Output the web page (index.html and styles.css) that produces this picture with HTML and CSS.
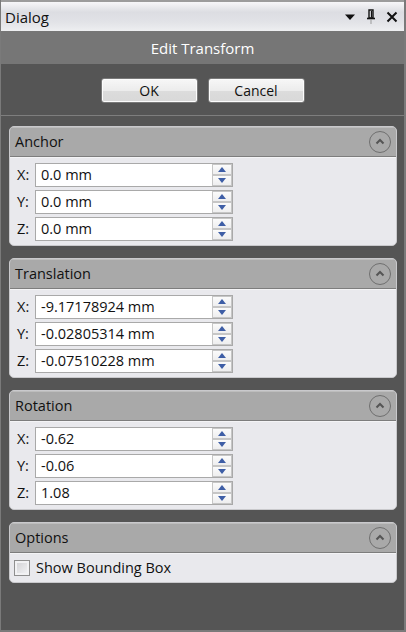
FILE: index.html
```html
<!DOCTYPE html>
<html>
<head>
<meta charset="utf-8">
<link rel="stylesheet" href="styles.css">
</head>
<body>
<div class="window">
  <div class="titlebar">
    <span class="title">Dialog</span>
    <div class="tools">
      <svg width="12" height="8" viewBox="0 0 12 8"><path d="M1 1.5 H11 L6 7 Z" fill="#111"/></svg>
      <svg width="10" height="16" viewBox="0 0 10 16"><path d="M3 1 H7 V9 H3 Z" fill="none" stroke="#111" stroke-width="1.4"/><path d="M1 9.5 H9" stroke="#111" stroke-width="1.6"/><path d="M5 10 V15" stroke="#999" stroke-width="1"/><path d="M5.5 2 V8.5" stroke="#111" stroke-width="1.2"/></svg>
      <svg width="12" height="12" viewBox="0 0 12 12"><path d="M1.5 1.5 L10.5 10.5 M10.5 1.5 L1.5 10.5" stroke="#111" stroke-width="2"/></svg>
    </div>
  </div>
  <div class="header">Edit Transform</div>
  <div class="actions">
    <button class="btn">OK</button>
    <button class="btn">Cancel</button>
  </div>
  <div class="sections">
    <div class="section">
      <div class="sec-head"><span>Anchor</span><span class="collapse"><svg width="10" height="7" viewBox="0 0 10 7"><path d="M1.5 5.5 L5 2 L8.5 5.5" fill="none" stroke="#555" stroke-width="2"/></svg></span></div>
      <div class="sec-body">
        <div class="row"><span class="lbl">X:</span><div class="spin"><span class="val">0.0 mm</span><div class="arrows"><span class="up"></span><span class="down"></span></div></div></div>
        <div class="row"><span class="lbl">Y:</span><div class="spin"><span class="val">0.0 mm</span><div class="arrows"><span class="up"></span><span class="down"></span></div></div></div>
        <div class="row"><span class="lbl">Z:</span><div class="spin"><span class="val">0.0 mm</span><div class="arrows"><span class="up"></span><span class="down"></span></div></div></div>
      </div>
    </div>
    <div class="section">
      <div class="sec-head"><span>Translation</span><span class="collapse"><svg width="10" height="7" viewBox="0 0 10 7"><path d="M1.5 5.5 L5 2 L8.5 5.5" fill="none" stroke="#555" stroke-width="2"/></svg></span></div>
      <div class="sec-body">
        <div class="row"><span class="lbl">X:</span><div class="spin"><span class="val">-9.17178924 mm</span><div class="arrows"><span class="up"></span><span class="down"></span></div></div></div>
        <div class="row"><span class="lbl">Y:</span><div class="spin"><span class="val">-0.02805314 mm</span><div class="arrows"><span class="up"></span><span class="down"></span></div></div></div>
        <div class="row"><span class="lbl">Z:</span><div class="spin"><span class="val">-0.07510228 mm</span><div class="arrows"><span class="up"></span><span class="down"></span></div></div></div>
      </div>
    </div>
    <div class="section">
      <div class="sec-head"><span>Rotation</span><span class="collapse"><svg width="10" height="7" viewBox="0 0 10 7"><path d="M1.5 5.5 L5 2 L8.5 5.5" fill="none" stroke="#555" stroke-width="2"/></svg></span></div>
      <div class="sec-body">
        <div class="row"><span class="lbl">X:</span><div class="spin"><span class="val">-0.62</span><div class="arrows"><span class="up"></span><span class="down"></span></div></div></div>
        <div class="row"><span class="lbl">Y:</span><div class="spin"><span class="val">-0.06</span><div class="arrows"><span class="up"></span><span class="down"></span></div></div></div>
        <div class="row"><span class="lbl">Z:</span><div class="spin"><span class="val">1.08</span><div class="arrows"><span class="up"></span><span class="down"></span></div></div></div>
      </div>
    </div>
    <div class="section">
      <div class="sec-head"><span>Options</span><span class="collapse"><svg width="10" height="7" viewBox="0 0 10 7"><path d="M1.5 5.5 L5 2 L8.5 5.5" fill="none" stroke="#555" stroke-width="2"/></svg></span></div>
      <div class="sec-body opts">
        <label class="check"><span class="box"></span>Show Bounding Box</label>
      </div>
    </div>
  </div>
</div>
</body>
</html>
```
FILE: styles.css
```css
* { box-sizing: border-box; }
html, body { margin: 0; padding: 0; }
body {
  width: 406px;
  height: 632px;
  overflow: hidden;
  background: #555555;
  font-family: "Open Sans", "Noto Sans", sans-serif;
  font-size: 14px;
  line-height: 1.2;
  color: #111;
}
.window {
  width: 406px;
  height: 632px;
  border-left: 1px solid #7a7a7a;
  border-right: 2px solid #7a7a7a;
  border-bottom: 2px solid #7a7a7a;
  display: flex;
  flex-direction: column;
  background: #555555;
  overflow: hidden;
}
.titlebar {
  flex: 0 0 31px;
  border-top: 2px solid #9c9c9c;
  background: linear-gradient(#f7f7f9 0%, #dcdde2 35%, #e2e3e7 70%, #eeeff1 100%);
  display: flex;
  align-items: center;
  justify-content: space-between;
  padding: 0 6px 0 4px;
}
.title { font-size: 15px; color: #111; }
.tools { display: flex; align-items: center; gap: 10px; }
.header {
  flex: 0 0 33px;
  background: #767676;
  color: #fff;
  font-size: 15px;
  display: flex;
  align-items: center;
  justify-content: center;
}
.actions {
  flex: 0 0 52px;
  display: flex;
  justify-content: center;
  align-items: flex-start;
  gap: 10px;
  padding-top: 14px;
  border-bottom: 1px solid #7e7e7e;
}
.btn {
  width: 97px;
  height: 25px;
  border: 1px solid #7a7a7a;
  border-radius: 3px;
  background: linear-gradient(#f7f7f7 0%, #ececec 50%, #dcdcdc 51%, #d8d8d8 100%);
  box-shadow: inset 0 0 0 1px #fcfcfc;
  font-family: inherit;
  font-size: 14px;
  color: #111;
  padding: 0;
}
.sections {
  flex: 0 0 auto;
  display: flex;
  flex-direction: column;
  gap: 12px;
  padding: 10px 7px 0 8px;
}
.section {
  flex: 0 0 auto;
  border: 1px solid #c9c9cc;
  border-radius: 5px;
  overflow: hidden;
  background: #e9e9ed;
}
.sec-head {
  height: 30px;
  background: #a9a9a9;
  border-bottom: 1px solid #7d7d7d;
  box-shadow: inset 0 1px 0 #bdbdbd;
  display: flex;
  align-items: center;
  justify-content: space-between;
  padding: 0 5px 0 5px;
  font-size: 14.5px;
  color: #111;
}
.collapse {
  width: 22px;
  height: 22px;
  border: 1.5px solid #6f6f6f;
  border-radius: 50%;
  display: flex;
  align-items: center;
  justify-content: center;
}
.sec-body {
  border-top: 1px solid #f4f4f6;
  padding: 5px 0 4px 7px;
  display: flex;
  flex-direction: column;
  gap: 3px;
}
.row { display: flex; align-items: center; height: 24px; flex: 0 0 24px; }
.lbl { width: 18px; font-size: 14.5px; }
.spin {
  width: 198px;
  height: 24px;
  background: #fff;
  border: 1px solid #a9a9a9;
  display: flex;
  align-items: center;
  justify-content: space-between;
  padding-left: 5px;
}
.val { font-size: 14.5px; }
.arrows {
  width: 20px;
  height: 22px;
  display: flex;
  flex-direction: column;
}
.arrows span {
  flex: 1;
  border: 1px solid #c6c6c6;
  background: linear-gradient(#fbfbfb, #eeeeef);
  position: relative;
}
.arrows .up::after, .arrows .down::after {
  content: "";
  position: absolute;
  left: 5px;
  width: 0; height: 0;
  border-left: 4.5px solid transparent;
  border-right: 4.5px solid transparent;
}
.arrows .up::after { top: 2px; border-bottom: 5px solid #3e5ea6; }
.arrows .down::after { top: 2px; border-top: 5px solid #3e5ea6; }
.opts { padding: 2px 0 2px 4px; }
.check { display: flex; align-items: center; gap: 6px; font-size: 14.5px; height: 24px; }
.box {
  width: 16px;
  height: 16px;
  border: 1px solid #8f8f8f;
  background: linear-gradient(135deg, #cfcfd2, #f6f6f8);
  box-shadow: inset 0 0 0 2px #f2f2f4;
}
```
